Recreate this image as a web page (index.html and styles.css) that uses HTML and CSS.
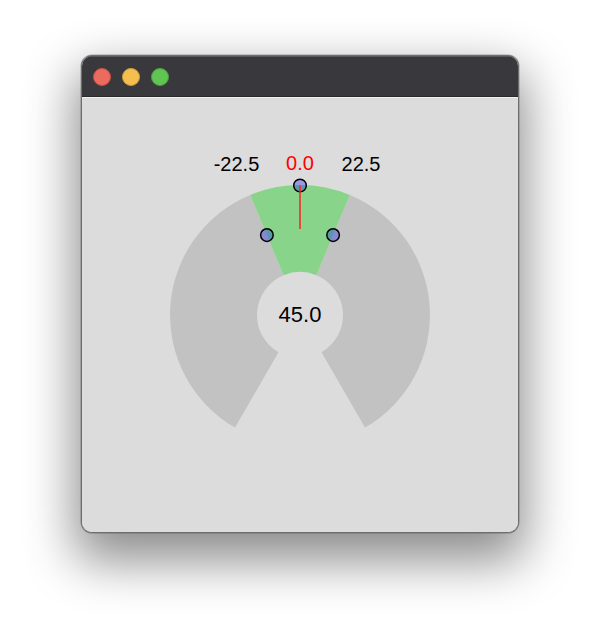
FILE: index.html
```html
<!DOCTYPE html>
<html>
<head>
<meta charset="utf-8">
<link rel="stylesheet" href="styles.css">
</head>
<body>
<div class="window">
  <div class="titlebar">
    <span class="light red"></span>
    <span class="light yellow"></span>
    <span class="light green"></span>
  </div>
  <div class="content">
    <svg class="gauge" viewBox="82 97 436 435" width="436" height="435">
      <path class="ring" d="M349.75,193.9 A130,130 0 0 1 365,426.58 L321.5,351.24 A43,43 0 0 0 316.46,274.27 Z"/>
      <path class="ring" d="M235,426.58 A130,130 0 0 1 250.25,193.9 L283.54,274.27 A43,43 0 0 0 278.5,351.24 Z"/>
      <path class="sel" d="M250.25,193.9 A130,130 0 0 1 349.75,193.9 L316.46,274.27 A43,43 0 0 0 283.54,274.27 Z"/>
      <circle class="handle" cx="266.9" cy="234.1" r="6.3"/>
      <circle class="handle" cx="333.1" cy="234.1" r="6.3"/>
      <circle class="handle" cx="300" cy="184.5" r="6.3"/>
      <line class="needle" x1="300" y1="184.5" x2="300" y2="228"/>
      <text class="lbl" x="236.5" y="169.5">-22.5</text>
      <text class="lbl zero" x="300" y="169">0.0</text>
      <text class="lbl" x="361" y="169.5">22.5</text>
      <text class="val" x="300" y="321">45.0</text>
    </svg>
  </div>
</div>
</body>
</html>
```
FILE: styles.css
```css
html, body {
  margin: 0;
  padding: 0;
  background: #ffffff;
}
body {
  padding-top: 55px;
  padding-left: 81px;
  height: 641px;
  box-sizing: border-box;
  overflow: hidden;
}
.window {
  width: 438px;
  height: 478px;
  box-sizing: border-box;
  border: 1px solid #6e6e70;
  border-radius: 11px;
  overflow: hidden;
  background: #dcdcdc;
  box-shadow: 0 22px 50px 6px rgba(0,0,0,0.45), 0 0 0 0.5px rgba(0,0,0,0.3);
  display: flex;
  flex-direction: column;
}
.titlebar {
  height: 41px;
  flex: none;
  background: #39383d;
  border-top: 1px solid #5a595e;
  border-bottom: 1px solid #2a2a2d;
  box-sizing: border-box;
  display: flex;
  align-items: center;
  gap: 11px;
  padding-left: 11px;
}
.light {
  width: 18px;
  height: 18px;
  border-radius: 50%;
  box-sizing: border-box;
}
.red { background: #ed6a5e; border: 1px solid #c5514a; }
.yellow { background: #f5bf4f; border: 1px solid #d09c3a; }
.green { background: #61c554; border: 1px solid #4aa23f; }
.content {
  flex: 1;
  background: #dcdcdc;
  border-top: 1px solid #f0f0f0;
}
.gauge {
  display: block;
}
.ring { fill: #c2c2c2; }
.sel { fill: #88d48a; }
.handle {
  fill: rgba(0,0,255,0.3);
  stroke: #000;
  stroke-width: 1.5;
}
.needle {
  stroke: #ff2020;
  stroke-width: 1.5;
}
.lbl {
  font-family: "Liberation Sans", Arial, sans-serif;
  font-size: 20px;
  text-anchor: middle;
  fill: #000;
}
.zero { fill: #ff0000; }
.val {
  font-family: "Liberation Sans", Arial, sans-serif;
  font-size: 22px;
  text-anchor: middle;
  fill: #000;
}
```
